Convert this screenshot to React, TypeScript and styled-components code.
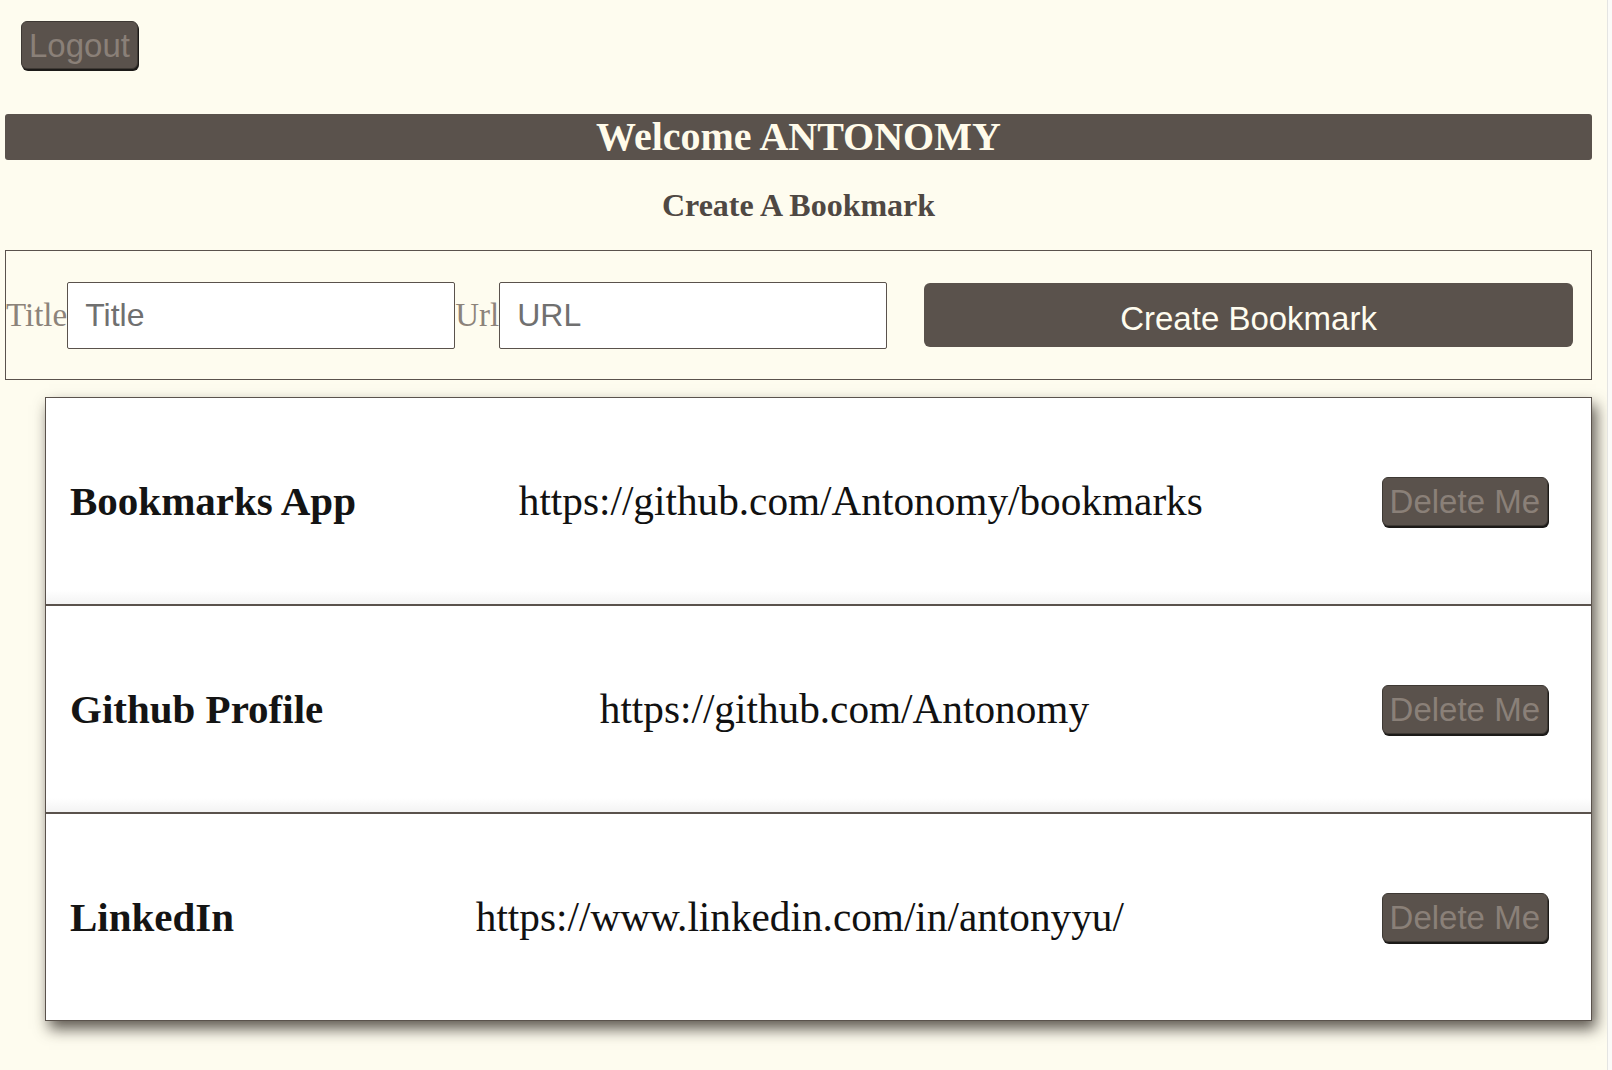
import React from 'react'
import styled, { createGlobalStyle } from 'styled-components'

const GlobalStyle = createGlobalStyle`
  html, body {
    margin: 0;
    background: #fefcef;
  }
  body {
    font-family: "Liberation Serif", "Times New Roman", serif;
  }
`

const Page = styled.div`
  padding: 21px 20px 40px 5px;
`

const TopBar = styled.div`
  padding-left: 16px;
  height: 48px;
  margin-bottom: 45px;
`

const DimButton = styled.button`
  height: ${({ $h }: { $h: number }) => $h}px;
  padding: 0 7px;
  background: #5a524c;
  color: #8a8078;
  font-family: "Liberation Sans", Arial, sans-serif;
  font-size: 33px;
  line-height: 1;
  border: 1px solid #3e3934;
  border-radius: 6px;
  box-shadow: 1px 2px 0 #1c1a18;
  cursor: pointer;
`

const WelcomeBar = styled.h1`
  margin: 0;
  height: 46px;
  line-height: 46px;
  background: #5a524c;
  color: #fffbea;
  font-size: 40px;
  font-weight: bold;
  text-align: center;
  border-radius: 3px;
`

const SubTitle = styled.h2`
  margin: 0;
  height: 90px;
  display: flex;
  align-items: center;
  justify-content: center;
  color: #4f4843;
  font-size: 32px;
  font-weight: bold;
`

const Form = styled.form`
  box-sizing: border-box;
  height: 130px;
  display: flex;
  align-items: center;
  padding-right: 18px;
  border: 1px solid #5a524c;
`

const Label = styled.label`
  color: #8c837a;
  font-size: 33px;
`

const TextInput = styled.input`
  box-sizing: border-box;
  width: 388px;
  height: 67px;
  padding: 0 17px;
  background: #fff;
  border: 1px solid #5a524c;
  border-radius: 2px;
  font-family: "Liberation Sans", Arial, sans-serif;
  font-size: 32px;
  color: #333;
  outline: none;

  &::placeholder {
    color: #707070;
  }
`

const CreateButton = styled.button`
  flex: 1;
  height: 64px;
  margin-left: 37px;
  background: #5a524c;
  color: #fefcef;
  border: none;
  border-radius: 6px;
  font-family: "Liberation Sans", Arial, sans-serif;
  font-size: 33px;
  padding-top: 8px;
  cursor: pointer;
`

const ListCard = styled.ul`
  list-style: none;
  margin: 17px 0 0 40px;
  padding: 0;
  background: #fff;
  border: 1px solid #5a524c;
  box-shadow: 4px 8px 14px rgba(40, 34, 28, 0.75);
`

const Row = styled.li`
  height: 206px;
  display: flex;
  align-items: center;
  justify-content: space-between;
  padding: 0 43px 0 24px;
  background: linear-gradient(to bottom, #fff calc(100% - 14px), #f3f3f3);

  & + & {
    border-top: 2px solid #5a524c;
  }
  &:last-child {
    background: #fff;
  }
`

const RowTitle = styled.h3`
  margin: 0;
  color: #141414;
  font-size: 41px;
  font-weight: bold;
`

const RowUrl = styled.p`
  margin: 0 16px 0 0;
  color: #111;
  font-size: 41.25px;
`

const ScrollEdge = styled.div`
  position: fixed;
  top: 0;
  right: 0;
  width: 4px;
  height: 100%;
  background: #fbfbf8;
  border-left: 1px solid #e4e4e2;
`

const bookmarks = [
  { title: 'Bookmarks App', url: 'https://github.com/Antonomy/bookmarks' },
  { title: 'Github Profile', url: 'https://github.com/Antonomy' },
  { title: 'LinkedIn', url: 'https://www.linkedin.com/in/antonyyu/' },
]

const App = () => {
  return (
    <Page>
      <GlobalStyle />
      <TopBar>
        <DimButton $h={48}>Logout</DimButton>
      </TopBar>
      <WelcomeBar>Welcome ANTONOMY</WelcomeBar>
      <SubTitle>Create A Bookmark</SubTitle>
      <Form onSubmit={(e) => e.preventDefault()}>
        <Label htmlFor="title">Title</Label>
        <TextInput id="title" placeholder="Title" />
        <Label htmlFor="url">Url</Label>
        <TextInput id="url" placeholder="URL" />
        <CreateButton type="submit">Create Bookmark</CreateButton>
      </Form>
      <ListCard>
        {bookmarks.map((b) => (
          <Row key={b.url}>
            <RowTitle>{b.title}</RowTitle>
            <RowUrl>{b.url}</RowUrl>
            <DimButton $h={49}>Delete Me</DimButton>
          </Row>
        ))}
      </ListCard>
      <ScrollEdge />
    </Page>
  )
}

export default App
